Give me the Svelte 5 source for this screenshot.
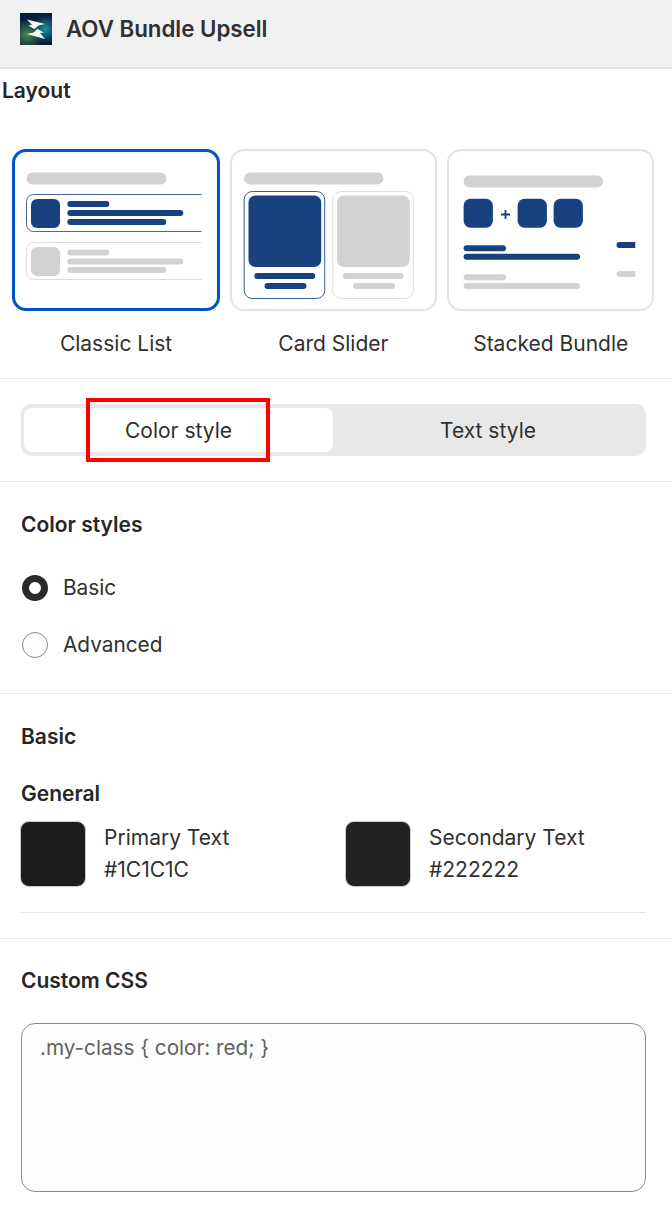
<script>
  const blue = '#17417f';
  const gray = '#d2d2d2';
  const cards = [
    {
      label: 'Classic List',
      selected: true,
      clip: 189.5,
      outlines: [
        { x: 14.5, y: 45.5, w: 190, h: 37, c: blue, o: 0.8 },
        { x: 14.5, y: 93.5, w: 190, h: 37, c: '#dcdcdc', o: 1 }
      ],
      bars: [
        [14.5, 23.5, 140, 12, 6, gray],
        [19, 50, 29, 29, 6, blue],
        [55.3, 52, 42, 6, 3, blue],
        [55.3, 61, 116, 6, 3, blue],
        [55.3, 70, 99, 6, 3, blue],
        [19, 98, 29, 29, 6, gray],
        [55.3, 100.5, 42, 6, 3, gray],
        [55.3, 109.5, 116, 6, 3, gray],
        [55.3, 118, 99, 6, 3, gray]
      ]
    },
    {
      label: 'Card Slider',
      outlines: [
        { x: 14.2, y: 42.5, w: 80.5, h: 107, r: 8, c: blue, o: 0.85 },
        { x: 102.8, y: 42.5, w: 80.5, h: 107, r: 8, c: '#dcdcdc', o: 1 }
      ],
      bars: [
        [14, 23.5, 139.5, 12, 6, gray],
        [18.5, 46.5, 72.7, 71.5, 7, blue],
        [24.3, 124, 61, 6, 3, blue],
        [34.5, 134, 42, 6, 3, blue],
        [107, 46.5, 72.7, 71.5, 7, gray],
        [112.8, 124, 61, 6, 3, gray],
        [123, 134, 42, 6, 3, gray]
      ]
    },
    {
      label: 'Stacked Bundle',
      clip: 188.3,
      outlines: [],
      plus: true,
      bars: [
        [16.6, 26.5, 139.5, 12, 6, gray],
        [16.6, 49.7, 29.3, 29, 7, blue],
        [70.6, 49.7, 29.3, 29, 7, blue],
        [106.6, 49.7, 29.3, 29, 7, blue],
        [16.6, 96.3, 42.4, 6, 3, blue],
        [16.6, 104.7, 116.5, 6, 3, blue],
        [16.6, 125.3, 42.4, 6, 3, gray],
        [16.6, 134, 116.5, 6, 3, gray],
        [169.5, 93, 25, 6, 3, blue],
        [169.5, 122, 25, 6, 3, gray]
      ]
    }
  ];
</script>

<main class="page">
  <header class="topbar">
    <svg class="logo" viewBox="0 0 32 32" aria-hidden="true">
      <defs>
        <radialGradient id="glowA" cx="0.22" cy="0.68" r="0.5">
          <stop offset="0" stop-color="#4a8a4e" />
          <stop offset="1" stop-color="#4a8a4e" stop-opacity="0" />
        </radialGradient>
        <radialGradient id="glowB" cx="0.8" cy="0.5" r="0.45">
          <stop offset="0" stop-color="#1c8f9a" />
          <stop offset="1" stop-color="#1c8f9a" stop-opacity="0" />
        </radialGradient>
      </defs>
      <rect width="32" height="32" fill="#061a3a" />
      <rect width="32" height="32" fill="url(#glowA)" />
      <rect width="32" height="32" fill="url(#glowB)" />
      <path d="M7 6.500 L25 11 L18.500 12.500 L14.500 16 L8 12.500 L12 12 Z" fill="#f2f8f7" />
      <path d="M25 26 L7 21 L13.500 19.500 L17.500 16 L24 19.500 L20 20 Z" fill="#f2f8f7" />
    </svg>
    <h1>AOV Bundle Upsell</h1>
  </header>

  <section class="layout">
    <h2 class="layout-title">Layout</h2>
    <div class="cards">
      {#each cards as card}
        <div class="option">
          <div class="thumb" class:selected={card.selected}>
            <svg viewBox="0 0 207.330 162" aria-hidden="true">
              {#each card.outlines as o}
                <rect x={o.x} y={o.y} width={o.w} height={o.h} rx={o.r ?? 7} fill="none" stroke={o.c} stroke-opacity={o.o} />
              {/each}
              {#each card.bars as b}
                <rect x={b[0]} y={b[1]} width={b[2]} height={b[3]} rx={b[4]} fill={b[5]} />
              {/each}
              {#if card.clip}
                <rect x={card.clip} y="40" width="17" height="95" fill="#fff" />
              {/if}
              {#if card.plus}
                <path d="M54 65.500h9M58.500 61v9" stroke={blue} stroke-width="1.800" fill="none" />
              {/if}
            </svg>
          </div>
          <span class="option-label">{card.label}</span>
        </div>
      {/each}
    </div>
  </section>

  <section class="tabs-section">
    <div class="tabs">
      <button class="tab active">Color style</button>
      <button class="tab second">Text style</button>
    </div>
    <div class="highlight"></div>
  </section>

  <section class="color-styles">
    <h3>Color styles</h3>
    <div class="radios">
      <label class="radio"><span class="dot checked"></span>Basic</label>
      <label class="radio"><span class="dot"></span>Advanced</label>
    </div>
  </section>

  <section class="basic">
    <h3>Basic</h3>
    <h4>General</h4>
    <div class="swatches">
      <div class="swatch-item">
        <span class="swatch primary"></span>
        <div class="swatch-text"><span>Primary Text</span><span>#1C1C1C</span></div>
      </div>
      <div class="swatch-item">
        <span class="swatch secondary"></span>
        <div class="swatch-text"><span>Secondary Text</span><span>#222222</span></div>
      </div>
    </div>
    <div class="inner-rule"></div>
  </section>

  <section class="custom">
    <h3>Custom CSS</h3>
    <div class="textarea">.my-class {'{'} color: red; {'}'}</div>
  </section>
</main>

<style>
  :global(body) {
    margin: 0;
    background: #fff;
  }
  .page {
    width: 672px;
    height: 1214px;
    overflow: hidden;
    font-family: Inter, "Liberation Sans", sans-serif;
    color: #303030;
    font-size: 21px;
    line-height: 26px;
  }
  h1, h2, h3, h4 {
    margin: 0;
    font-size: 21px;
    line-height: 26px;
    font-weight: 600;
    color: #262626;
  }
  .topbar {
    height: 67px;
    box-sizing: content-box;
    display: flex;
    align-items: center;
    gap: 14px;
    padding: 0 20px;
    background: #f1f1f1;
    border-bottom: 2px solid #e0e0e0;
  }
  .logo {
    width: 32px;
    height: 32px;
    margin-top: -9px;
  }
  .topbar h1 {
    font-size: 22.300px;
    margin-top: -10px;
    color: #303030;
  }
  .layout {
    height: 309px;
    border-bottom: 1px solid #e6e6e6;
  }
  .layout-title {
    padding: 9px 0 0 2px;
  }
  .cards {
    display: grid;
    grid-template-columns: repeat(3, 1fr);
    gap: 10px;
    padding: 45px 17.800px 0 12.400px;
  }
  .option {
    display: flex;
    flex-direction: column;
    align-items: center;
  }
  .thumb {
    width: 100%;
    height: 162px;
    box-sizing: border-box;
    border: 2px solid #e3e3e3;
    border-radius: 14px;
    overflow: hidden;
  }
  .thumb.selected {
    border: 3px solid #0052cc;
  }
  .thumb svg {
    display: block;
    width: 207.330px;
    height: 162px;
    margin: -2px;
  }
  .thumb.selected svg {
    margin: -3px;
  }
  .option-label {
    margin-top: 20px;
  }
  .tabs-section {
    position: relative;
    height: 103px;
    border-bottom: 1px solid #e6e6e6;
    padding: 25px 26px 0 21px;
    box-sizing: border-box;
  }
  .tabs {
    display: flex;
    height: 52px;
    box-sizing: border-box;
    padding: 4px 0 4px 3px;
    background: #e8e8e8;
    border-radius: 10px;
  }
  .tab {
    flex: 0 0 309px;
    border: 0;
    background: none;
    border-radius: 8px;
    font: inherit;
    color: #303030;
    padding: 1px 0 0;
  }
  .tab.second {
    flex: 1;
    padding-right: 3px;
  }
  .tab.active {
    background: #fff;
  }
  .highlight {
    position: absolute;
    left: 86px;
    top: 19px;
    width: 184px;
    height: 64px;
    box-sizing: border-box;
    border: 4px solid #f00;
  }
  .color-styles {
    height: 212px;
    border-bottom: 1px solid #e6e6e6;
    padding: 30px 21px 0;
    box-sizing: border-box;
  }
  .radios {
    display: flex;
    flex-direction: column;
    gap: 31px;
    margin-top: 37px;
    font-size: 20.800px;
  }
  .radio {
    display: flex;
    align-items: center;
    gap: 15px;
    height: 26px;
  }
  .dot {
    width: 26px;
    height: 26px;
    margin-left: 1px;
    box-sizing: border-box;
    border: 1px solid #8a8a8a;
    border-radius: 50%;
    background: #fdfdfd;
  }
  .dot.checked {
    border: 7px solid #2a2a2a;
    background: #fff;
  }
  .basic {
    height: 245px;
    padding: 30px 26px 0 21px;
    box-sizing: border-box;
    border-bottom: 1px solid #e6e6e6;
  }
  .basic h4 {
    margin-top: 31px;
  }
  .swatches {
    display: grid;
    grid-template-columns: 325px 1fr;
    margin: 14px 0 0 -1px;
  }
  .swatch-item {
    display: flex;
    align-items: center;
    gap: 18px;
  }
  .swatch {
    width: 66px;
    height: 66px;
    box-sizing: border-box;
    border: 1px solid #c9c9c9;
    border-radius: 9px;
  }
  .primary { background: #1c1c1c; }
  .secondary { background: #222; }
  .swatch-text {
    display: flex;
    flex-direction: column;
    gap: 6px;
  }
  .inner-rule {
    height: 1px;
    margin-top: 25px;
    background: #e6e6e6;
  }
  .custom {
    padding: 29px 26px 0 21px;
  }
  .textarea {
    margin-top: 29px;
    height: 169px;
    box-sizing: border-box;
    border: 1px solid #8a8a8a;
    border-radius: 14px;
    background: #fdfdfd;
    padding: 11px 18px;
    color: #616161;
    font-size: 20.700px;
  }
</style>
